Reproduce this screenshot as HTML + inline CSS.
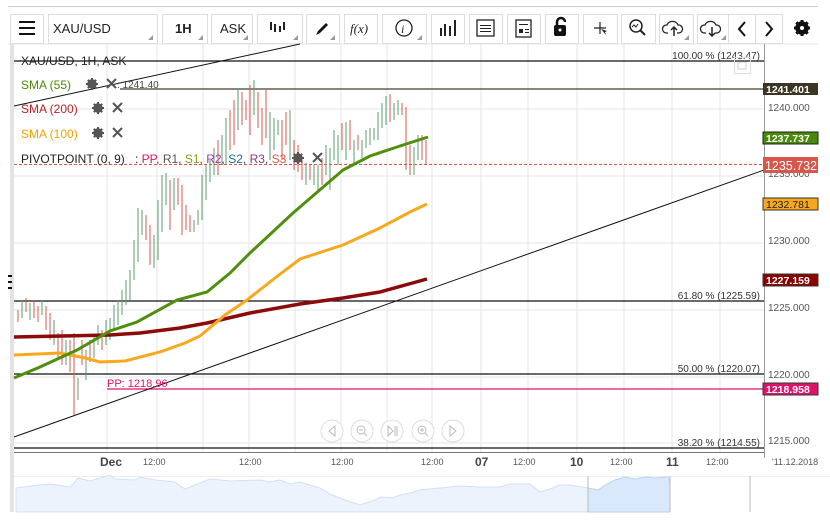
<!DOCTYPE html>
<html><head><meta charset="utf-8"><style>
html,body{margin:0;padding:0;background:#fff;width:830px;height:521px;overflow:hidden;font-family:"Liberation Sans",sans-serif}
svg{position:absolute;left:0;top:0}
</style></head><body>
<svg width="830" height="521" viewBox="0 0 830 521" font-family="Liberation Sans, sans-serif">
<line x1="8" y1="6.5" x2="818" y2="6.5" stroke="#ccc"/>
<g fill="#fff" stroke="#ddd">
<rect x="10.5" y="14.5" width="33" height="29"/>
<rect x="48.5" y="14.5" width="109" height="29"/>
<rect x="162.5" y="14.5" width="45" height="29"/>
<rect x="211.5" y="14.5" width="41" height="29"/>
<rect x="257.5" y="14.5" width="45" height="29"/>
<rect x="306.5" y="14.5" width="33" height="29"/>
<rect x="344.5" y="14.5" width="33" height="29"/>
<rect x="382.5" y="14.5" width="44" height="29"/>
<rect x="431.5" y="14.5" width="33" height="29"/>
<rect x="469.5" y="14.5" width="33" height="29"/>
<rect x="507.5" y="14.5" width="33" height="29"/>
<rect x="545.5" y="14.5" width="33" height="29"/>
<rect x="583.5" y="14.5" width="34" height="29"/>
<rect x="621.5" y="14.5" width="34" height="29"/>
<rect x="659.5" y="14.5" width="34" height="29"/>
<rect x="697.5" y="14.5" width="31" height="29"/>
<rect x="728.5" y="14.5" width="27" height="29"/>
<rect x="755.5" y="14.5" width="27" height="29"/>
</g>
<g fill="#999">
<path d="M153 40h-5l5-5z"/><path d="M203 40h-5l5-5z"/><path d="M248 40h-5l5-5z"/><path d="M298 40h-5l5-5z"/><path d="M335 40h-5l5-5z"/><path d="M422 40h-5l5-5z"/><path d="M689 40h-5l5-5z"/><path d="M726 40h-5l5-5z"/>
</g>
<g fill="#111"><rect x="19" y="21" width="16" height="2"/><rect x="19" y="27" width="16" height="2"/><rect x="19" y="33" width="16" height="2"/></g>
<text x="53" y="33" font-size="13" fill="#222">XAU/USD</text>
<text x="175" y="33" font-size="13" fill="#222" font-weight="bold">1H</text>
<text x="220" y="33" font-size="13" fill="#222">ASK</text>
<g stroke="#222" stroke-width="2"><path d="M271 22v8M275 24v8M280 26v6M284 22v8"/></g>
<path d="M316 35l2-4 8-8 2 2-8 8z" fill="#111"/>
<text x="350" y="33" font-size="13" font-style="italic" font-family="Liberation Serif, serif" fill="#222">f(x)</text>
<circle cx="404" cy="28" r="8" fill="none" stroke="#222" stroke-width="1.3"/><text x="401" y="33" font-size="12" font-style="italic" font-family="Liberation Serif, serif" fill="#222">i</text>
<g fill="#222"><rect x="440" y="28" width="2" height="8"/><rect x="444" y="24" width="2" height="12"/><rect x="449" y="26" width="2" height="10"/><rect x="454" y="20" width="2" height="16"/></g>
<rect x="477" y="20" width="17" height="16" fill="none" stroke="#222" stroke-width="1.3"/><g fill="#222"><rect x="480" y="25" width="11" height="1"/><rect x="480" y="28" width="11" height="1"/><rect x="480" y="31" width="11" height="1"/></g>
<rect x="516" y="20" width="15" height="17" fill="none" stroke="#222" stroke-width="1.3"/><rect x="519" y="29" width="4" height="4" fill="#222"/><g fill="#222"><rect x="519" y="24" width="9" height="1"/><rect x="525" y="29" width="4" height="1"/><rect x="525" y="32" width="4" height="1"/></g>
<path d="M557 25v-3a4 4 0 0 1 8 0" fill="none" stroke="#111" stroke-width="2.5"/><rect x="554" y="25" width="12" height="11" rx="2" fill="#111"/><circle cx="560" cy="30" r="1.5" fill="#fff"/>
<path d="M594 28h12M600 22v12" stroke="#222" stroke-width="1.2"/><path d="M601 29l6 2-2 1 1 3z" fill="#222"/>
<circle cx="636" cy="26" r="6" fill="none" stroke="#222" stroke-width="1.5"/><path d="M640 30l5 5" stroke="#222" stroke-width="2"/><path d="M632 27l2-2 2 2 2-3" stroke="#222" fill="none"/>
<path d="M668 33h-2a4 4 0 0 1 1-8 6 6 0 0 1 11 0 4 4 0 0 1 1 8h-2" fill="none" stroke="#222" stroke-width="1.3"/><path d="M674 36v-9M671 30l3-3 3 3" stroke="#222" fill="none" stroke-width="1.5"/>
<path d="M706 33h-2a4 4 0 0 1 1-8 6 6 0 0 1 11 0 4 4 0 0 1 1 8h-2" fill="none" stroke="#222" stroke-width="1.3"/><path d="M712 27v9M709 33l3 3 3-3" stroke="#222" fill="none" stroke-width="1.5"/>
<path d="M745 22l-6 7 6 7" stroke="#111" stroke-width="2" fill="none"/>
<path d="M766 22l6 7-6 7" stroke="#111" stroke-width="2" fill="none"/>
<g transform="translate(802,28)"><circle r="5" fill="none" stroke="#111" stroke-width="3.5"/><g stroke="#111" stroke-width="3"><path d="M0-8v16M-8 0h16M-5.7-5.7l11.4 11.4M5.7-5.7l-11.4 11.4"/></g><circle r="2" fill="#fff"/></g>
<line x1="8" y1="44" x2="818" y2="44" stroke="#e4e4e4"/>
<rect x="10" y="44" width="4" height="468" fill="#e3e3e3"/>
<g fill="#111"><rect x="8" y="275" width="4" height="2"/><rect x="8" y="281" width="4" height="2"/><rect x="8" y="287" width="4" height="2"/></g>
<g stroke="#e6e6e6">
<path d="M107 44V452M157 44V452M203 44V452M249 44V452M295 44V452M341 44V452M387 44V452M432 44V452M481 44V452M528 44V452M577 44V452M624 44V452M672 44V452M720 44V452"/>
<path d="M14 109H764M14 176H764M14 243H764M14 310H764M14 377H764M14 443H764"/>
</g>
<line x1="764.5" y1="44" x2="764.5" y2="458" stroke="#999"/>
<g stroke="#111" stroke-width="1.2">
<path d="M14 61H764M14 301H764M14 374H764M14 448H764"/>
</g>
<path d="M120 89H764" stroke="#443e2c" stroke-width="1.2"/>
<path d="M14 164.5H764" stroke="#d9574a" stroke-dasharray="3,2"/>
<path d="M107 389H764" stroke="#e0136b" stroke-width="1.2"/>
<path d="M14 452.5H764" stroke="#777"/>
<path d="M14 106L300 44" stroke="#111"/>
<path d="M14 437L764 170" stroke="#111"/>
<path stroke="#5a9e6f" stroke-width="1" fill="none" d="M22 300V318M30 303V320M42 300V315M54 320V345M66 340V365M78 378V400M86 350V380M94 335V358M98 325V345M106 320V345M110 318V340M114 305V330M118 300V325M122 290V315M126 280V305M130 270V300M134 240V280M138 208V262M142 210V235M154 235V268M158 200V260M162 175V232M166 173V205M174 178V210M194 220V232M198 210V225M202 175V220M206 165V200M210 160V182M214 148V175M222 135V165M226 118V165M238 88V130M254 80V115M270 112V160M274 118V150M278 120V135M290 110V160M306 163V185M314 165V185M318 165V192M326 145V175M330 148V190M334 130V160M338 135V165M346 122V160M354 140V163M362 140V158M366 130V148M370 128V145M374 128V140M378 112V140M382 103V128M386 96V125M394 103V120M398 100V115M414 147V175M418 135V160"/>
<path stroke="#d9574a" stroke-width="1" fill="none" d="M18 310V322M26 298V312M34 300V318M38 306V322M46 306V330M50 313V340M58 333V358M62 330V365M70 340V372M74 333V415M82 340V365M90 340V362M102 330V350M146 215V240M150 225V265M170 180V230M178 178V205M182 185V235M186 205V230M190 215V232M218 140V175M230 110V150M234 100V145M242 92V125M246 100V120M250 85V135M258 92V128M262 108V145M266 90V138M282 120V160M286 112V145M294 140V170M298 145V172M302 160V180M310 165V180M322 158V185M342 123V150M350 120V150M358 135V150M390 94V122M402 103V115M406 107V170M410 145V175M422 135V160M426 140V165"/>
<path d="M14 337L110 335L140 333L180 328L207 323L250 313L300 304L343 298L380 292L427 279" stroke="#8b0a0a" stroke-width="3.5" fill="none"/>
<path d="M14 355L60 353L85 358L100 362L125 361L160 352L185 343L200 336L225 315L247 300L275 278L300 259L343 245L380 228L410 212L427 204" stroke="#f8a81c" stroke-width="3" fill="none"/>
<path d="M14 378L40 367L77 350L110 331L137 322L177 300L207 292L230 273L250 253L293 213L343 170L370 156L400 146L428 137" stroke="#4f8f0e" stroke-width="3" fill="none"/>
<g font-size="12">
<text x="21" y="65" fill="#222">XAU/USD, 1H, ASK</text>
<text x="21" y="89" fill="#4a8a0a">SMA (55)</text>
<text x="21" y="113" fill="#b22">SMA (200)</text>
<text x="21" y="138" fill="#f5a000">SMA (100)</text>
<text x="21" y="163" fill="#222">PIVOTPOINT (0, 9)</text>
<text x="135" y="163"><tspan fill="#222">: </tspan><tspan fill="#e0136b">PP</tspan><tspan fill="#444">, </tspan><tspan fill="#555">R1</tspan><tspan fill="#444">, </tspan><tspan fill="#8a9a20">S1</tspan><tspan fill="#444">, </tspan><tspan fill="#9b3fae">R2</tspan><tspan fill="#444">, </tspan><tspan fill="#1e6a8a">S2</tspan><tspan fill="#444">, </tspan><tspan fill="#8a3a8a">R3</tspan><tspan fill="#444">, </tspan><tspan fill="#d9574a">S3</tspan></text>
<text x="117" y="88" font-size="10" fill="#444">: 1241.40</text>
<text x="107" y="387" font-size="11" fill="#e0136b">PP: 1218.96</text>
</g>
<g fill="#555">
<g transform="translate(92,84)"><circle r="3.5" fill="none" stroke="#555" stroke-width="2.5"/><path d="M0-6v12M-6 0h12M-4.2-4.2l8.4 8.4M4.2-4.2l-8.4 8.4" stroke="#555" stroke-width="2"/></g>
<g transform="translate(98,108)"><circle r="3.5" fill="none" stroke="#555" stroke-width="2.5"/><path d="M0-6v12M-6 0h12M-4.2-4.2l8.4 8.4M4.2-4.2l-8.4 8.4" stroke="#555" stroke-width="2"/></g>
<g transform="translate(98,133)"><circle r="3.5" fill="none" stroke="#555" stroke-width="2.5"/><path d="M0-6v12M-6 0h12M-4.2-4.2l8.4 8.4M4.2-4.2l-8.4 8.4" stroke="#555" stroke-width="2"/></g>
<g transform="translate(298,158)"><circle r="3.5" fill="none" stroke="#555" stroke-width="2.5"/><path d="M0-6v12M-6 0h12M-4.2-4.2l8.4 8.4M4.2-4.2l-8.4 8.4" stroke="#555" stroke-width="2"/></g>
</g>
<g stroke="#555" stroke-width="2"><path d="M107 79l9 9M116 79l-9 9M113 103l9 9M122 103l-9 9M113 128l9 9M122 128l-9 9M313 153l9 9M322 153l-9 9"/></g>
<g font-size="10" fill="#333" text-anchor="end">
<text x="760" y="59">100.00 % (1243.47)</text>
<text x="760" y="299">61.80 % (1225.59)</text>
<text x="760" y="372">50.00 % (1220.07)</text>
<text x="760" y="446">38.20 % (1214.55)</text>
</g>
<rect x="734.5" y="57.5" width="16" height="16" fill="none" stroke="#ddd"/><rect x="738" y="62" width="8" height="7" fill="none" stroke="#ccc"/>
<g font-size="10" fill="#555">
<text x="768" y="111">1240.000</text><text x="768" y="177">1235.000</text><text x="768" y="244">1230.000</text><text x="768" y="311">1225.000</text><text x="768" y="378">1220.000</text><text x="768" y="444">1215.000</text>
</g>
<g font-size="10.5" font-weight="bold">
<rect x="763" y="83" width="55" height="12" fill="#3d3524"/><text x="766" y="93" fill="#fff">1241.401</text>
<rect x="763" y="132" width="55" height="12" fill="#4a8a0a" stroke="#222"/><text x="766" y="142" fill="#fff">1237.737</text>
<rect x="763" y="198" width="55" height="12" fill="#f8a81c" stroke="#333"/><text x="766" y="208" fill="#222" font-weight="normal">1232.781</text>
<rect x="763" y="274" width="55" height="12" fill="#8b0000" stroke="#333"/><text x="766" y="284" fill="#fff">1227.159</text>
<rect x="763" y="383" width="55" height="12" fill="#e0136b" stroke="#333"/><text x="766" y="393" fill="#fff">1218.958</text>
</g>
<rect x="763" y="157" width="55" height="16" fill="#d9574a"/><text x="765" y="170" font-size="12.5" fill="#fff" textLength="52" lengthAdjust="spacingAndGlyphs">1235.732</text>
<g fill="#fff" stroke="#ddd"><circle cx="332" cy="431" r="11"/><circle cx="362" cy="431" r="11"/><circle cx="392" cy="431" r="11"/><circle cx="423" cy="431" r="11"/><circle cx="453" cy="431" r="11"/></g>
<g stroke="#bbb" fill="none"><path d="M335 426l-6 5 6 5z"/><circle cx="361" cy="430" r="4"/><path d="M359 430h4M364 433l3 3"/><path d="M388 426l5 5-5 5zM395 426v10M397 426v10"/><circle cx="422" cy="430" r="4"/><path d="M420 430h4M422 428v4M425 433l3 3"/><path d="M450 426l6 5-6 5z"/></g>
<g font-size="9" fill="#555">
<text x="100" y="466" font-size="12" fill="#444" font-weight="bold">Dec</text>
<text x="143" y="465">12:00</text><text x="239" y="465">12:00</text><text x="331" y="465">12:00</text><text x="421" y="465">12:00</text>
<text x="475" y="466" font-size="12" fill="#444" font-weight="bold">07</text>
<text x="513" y="465">12:00</text>
<text x="570" y="466" font-size="12" fill="#444" font-weight="bold">10</text>
<text x="610" y="465">12:00</text>
<text x="666" y="466" font-size="12" fill="#444" font-weight="bold">11</text>
<text x="706" y="465">12:00</text><text x="772" y="465">'11.12.2018</text>
</g>
<line x1="14" y1="476.5" x2="830" y2="476.5" stroke="#eee"/>
<path d="M16 512V488L30 486L50 484L70 487L75 482L78 478L90 481L100 478L110 475L115 479L135 480L140 477L155 480L175 482L185 489L200 483L210 479L230 481L260 480L270 482L280 480L290 484L300 482L320 488L330 494L345 500L360 505L375 500L381 497L392 498L400 495L410 493L420 490L440 488L460 486L480 487L500 487L510 484L530 484L540 492L550 489L560 485L570 485L588 488L588 512Z" fill="#edf3fc" stroke="#d0e0f6"/>
<path d="M588 512V488L598 490L607 484L615 480L625 477L635 479L645 477L655 478L668 477L670 482V512Z" fill="#d9e8fa" stroke="#b9d2f2"/>
<path d="M588 476V512M670 476V512M750 476V512" stroke="#bbb"/>
</svg>
</body></html>
